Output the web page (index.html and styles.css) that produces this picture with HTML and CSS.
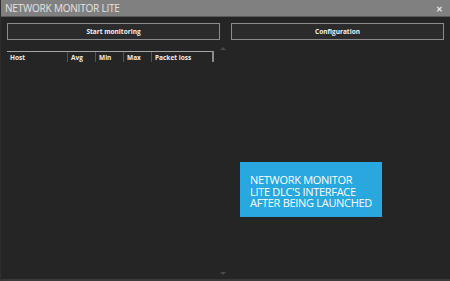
FILE: index.html
```html
<!DOCTYPE html>
<html lang="en">
<head>
  <meta charset="UTF-8" />
  <title>Network Monitor Lite</title>
  <link rel="stylesheet" href="styles.css">
</head>
<body>
  <div class="window">
    <div class="titlebar">
      <span class="title">NETWORK MONITOR LITE</span>
      <span class="close">&#x2715;</span>
    </div>
    <div class="content">
      <div class="buttons">
        <button class="btn">Start monitoring</button>
        <button class="btn">Configuration</button>
      </div>
      <div class="main">
        <div class="left">
          <div class="table-head">
            <div class="col col-host">Host</div>
            <div class="col col-sm">Avg</div>
            <div class="col col-sm">Min</div>
            <div class="col col-sm">Max</div>
            <div class="col col-loss">Packet loss</div>
          </div>
        </div>
        <div class="scroller">
          <span class="arrow up"></span>
          <span class="arrow down"></span>
        </div>
        <div class="right">
          <div class="caption">NETWORK MONITOR<br>LITE DLC'S INTERFACE<br>AFTER BEING LAUNCHED</div>
        </div>
      </div>
    </div>
  </div>
</body>
</html>
```

FILE: styles.css
```css
html, body {
  margin: 0;
  padding: 0;
  background: #252525;
}

.window {
  width: 450px;
  height: 281px;
  display: flex;
  flex-direction: column;
  font-family: "Open Sans", "Noto Sans", sans-serif;
  box-sizing: border-box;
  border-left: 1px solid #2e2e2e;
  border-bottom: 2px solid #3a3a3a;
}

.titlebar {
  height: 16px;
  background: #808080;
  border-bottom: 1px solid #5a5a5a;
  display: flex;
  align-items: center;
  justify-content: space-between;
  padding: 0 7px 0 4px;
}

.title {
  color: #e4e4e4;
  font-size: 10px;
  letter-spacing: -0.2px;
}

.close {
  color: #e8e8e8;
  font-size: 8px;
  font-weight: bold;
}

.content {
  flex: 1;
  display: flex;
  flex-direction: column;
  padding: 6px 6px 0 6px;
}

.buttons {
  display: flex;
  gap: 11px;
}

.btn {
  flex: 1;
  height: 17px;
  background: #2b2b2b;
  border: 1px solid #8c8c8c;
  color: #f2f2f2;
  font-family: "Open Sans", sans-serif;
  font-weight: bold;
  font-size: 6.5px;
  padding: 0;
}

.main {
  flex: 1;
  display: flex;
  margin-top: 11px;
}

.left {
  width: 206px;
}

.table-head {
  display: flex;
  height: 10px;
  border-top: 1px solid #a5a5a5;
  border-right: 2px solid #8a8a8a;
  margin-right: -1px;
}

.col {
  color: #f0f0f0;
  font-size: 6.5px;
  font-weight: bold;
  line-height: 11px;
  padding-left: 3px;
  border-right: 1px solid #555;
  box-sizing: border-box;
}

.col-host { width: 61px; }
.col-sm { width: 28px; }
.col-loss { flex: 1; border-right: none; }

.scroller {
  width: 20px;
  position: relative;
}

.arrow {
  position: absolute;
  left: 7px;
  width: 0;
  height: 0;
  border-left: 3px solid transparent;
  border-right: 3px solid transparent;
}

.arrow.up {
  top: -4px;
  border-bottom: 3px solid #4a4a4a;
}

.arrow.down {
  bottom: 4px;
  border-top: 3px solid #4a4a4a;
}

.right {
  flex: 1;
  padding-top: 111px;
  padding-left: 7px;
}

.caption {
  width: 124px;
  background: #29a8e0;
  color: #ffffff;
  font-size: 11px;
  line-height: 11.5px;
  padding: 12px 8px 8px 10px;
  letter-spacing: -0.3px;
}
```
